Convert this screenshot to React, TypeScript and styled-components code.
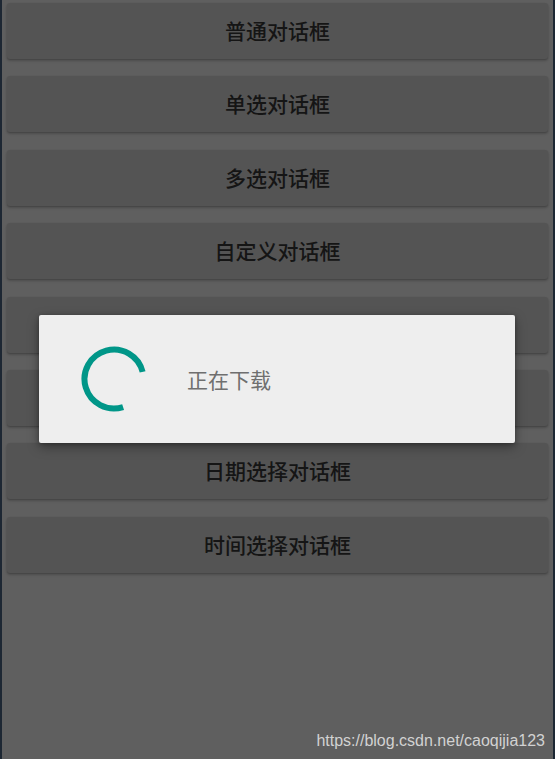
import React from 'react';
import styled, { createGlobalStyle } from 'styled-components';

const GlobalStyle = createGlobalStyle`
    html, body {
        margin: 0;
        padding: 0;
        background: #1d2733;
    }
    body {
        font-family: "Noto Sans CJK SC", "Noto Sans", sans-serif;
    }
`;

const Frame = styled.div`
    position: relative;
    width: 555px;
    height: 759px;
    box-sizing: border-box;
    border-left: 2px solid #1d2733;
    border-right: 2px solid #1d2733;
    background: #5f5f5f;
    overflow: hidden;
`;

const ButtonList = styled.div`
    display: flex;
    flex-direction: column;
    gap: 17.4px;
    padding: 3px 5px 0 5px;
`;

const DialogButton = styled.div`
    height: 56px;
    box-sizing: border-box;
    padding-bottom: 2px;
    border-radius: 3px;
    background: #545454;
    box-shadow: 0 1px 2px rgba(0, 0, 0, 0.22), 0 2px 3px rgba(0, 0, 0, 0.12);
    display: flex;
    align-items: center;
    justify-content: center;
    color: #151515;
    font-size: 21px;
    font-weight: 500;
`;

const ProgressDialog = styled.div`
    position: absolute;
    left: 37px;
    top: 315px;
    width: 476px;
    height: 128px;
    border-radius: 2px;
    background: #eeeeee;
    box-shadow: 0 4px 12px rgba(0, 0, 0, 0.35), 0 1px 4px rgba(0, 0, 0, 0.25);
    display: flex;
    align-items: center;
    padding-left: 42px;
    box-sizing: border-box;
    gap: 40px;
`;

const Spinner = styled.svg`
    width: 66px;
    height: 66px;
    flex-shrink: 0;
`;

const Message = styled.span`
    color: #6f6f6f;
    font-size: 21px;
`;

const Watermark = styled.div`
    position: absolute;
    right: 8px;
    bottom: 9px;
    font-family: "Liberation Sans", Arial, sans-serif;
    font-size: 16px;
    color: #d2d2d2;
`;

// the two buttons under the dialog are fully covered, so their labels are not drawn
const items = [
    '普通对话框',
    '单选对话框',
    '多选对话框',
    '自定义对话框',
    '',
    '',
    '日期选择对话框',
    '时间选择对话框',
];

// arc from ~72deg (lower right) clockwise to ~346deg (upper right)
const arcPath = (() => {
    const r = 29.5;
    const c = 33;
    const a0 = (72 * Math.PI) / 180;
    const a1 = (346 * Math.PI) / 180;
    const x0 = c + r * Math.cos(a0);
    const y0 = c + r * Math.sin(a0);
    const x1 = c + r * Math.cos(a1);
    const y1 = c + r * Math.sin(a1);
    return `M ${x0} ${y0} A ${r} ${r} 0 1 1 ${x1} ${y1}`;
})();

const App: React.FC = () => {
    return (
        <>
            <GlobalStyle />
            <Frame>
                <ButtonList>
                    {items.map((label, i) => (
                        <DialogButton key={i}>{label}</DialogButton>
                    ))}
                </ButtonList>
                <ProgressDialog>
                    <Spinner viewBox="0 0 66 66">
                        <path d={arcPath} fill="none" stroke="#009688" strokeWidth="6" />
                    </Spinner>
                    <Message>正在下载</Message>
                </ProgressDialog>
                <Watermark>https://blog.csdn.net/caoqijia123</Watermark>
            </Frame>
        </>
    );
};

export default App;
